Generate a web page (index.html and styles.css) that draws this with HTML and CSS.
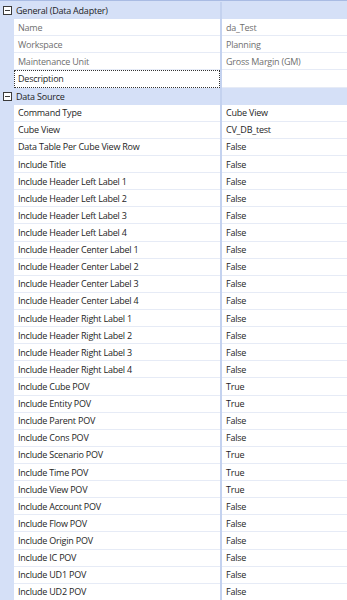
FILE: index.html
```html
<!DOCTYPE html>
<html>
<head>
<meta charset="utf-8">
<link rel="stylesheet" href="styles.css">
</head>
<body>
<div class="grid">
  <div class="cat">
    <div class="gutter"><svg class="tog" width="9" height="9" viewBox="0 0 9 9"><rect x="0.5" y="0.5" width="8" height="8" fill="#fff" stroke="#3b3b3b"/><rect x="2" y="4" width="5" height="1" fill="#3b3b3b"/></svg></div>
    <div class="cat-name">General (Data Adapter)</div>
    <div class="div"></div>
    <div class="cat-val"></div>
  </div>
  <div class="row ro"><div class="gutter"></div><div class="name">Name</div><div class="div"></div><div class="val">da_Test</div></div>
  <div class="row ro"><div class="gutter"></div><div class="name">Workspace</div><div class="div"></div><div class="val">Planning</div></div>
  <div class="row ro"><div class="gutter"></div><div class="name">Maintenance Unit</div><div class="div"></div><div class="val">Gross Margin (GM)</div></div>
  <div class="row"><div class="gutter"></div><div class="name focus">Description</div><div class="div"></div><div class="val"></div></div>
  <div class="cat">
    <div class="gutter"><svg class="tog" width="9" height="9" viewBox="0 0 9 9"><rect x="0.5" y="0.5" width="8" height="8" fill="#fff" stroke="#3b3b3b"/><rect x="2" y="4" width="5" height="1" fill="#3b3b3b"/></svg></div>
    <div class="cat-name">Data Source</div>
    <div class="div"></div>
    <div class="cat-val"></div>
  </div>
  <div class="row"><div class="gutter"></div><div class="name">Command Type</div><div class="div"></div><div class="val">Cube View</div></div>
  <div class="row"><div class="gutter"></div><div class="name">Cube View</div><div class="div"></div><div class="val">CV_DB_test</div></div>
  <div class="row"><div class="gutter"></div><div class="name">Data Table Per Cube View Row</div><div class="div"></div><div class="val">False</div></div>
  <div class="row"><div class="gutter"></div><div class="name">Include Title</div><div class="div"></div><div class="val">False</div></div>
  <div class="row"><div class="gutter"></div><div class="name">Include Header Left Label 1</div><div class="div"></div><div class="val">False</div></div>
  <div class="row"><div class="gutter"></div><div class="name">Include Header Left Label 2</div><div class="div"></div><div class="val">False</div></div>
  <div class="row"><div class="gutter"></div><div class="name">Include Header Left Label 3</div><div class="div"></div><div class="val">False</div></div>
  <div class="row"><div class="gutter"></div><div class="name">Include Header Left Label 4</div><div class="div"></div><div class="val">False</div></div>
  <div class="row"><div class="gutter"></div><div class="name">Include Header Center Label 1</div><div class="div"></div><div class="val">False</div></div>
  <div class="row"><div class="gutter"></div><div class="name">Include Header Center Label 2</div><div class="div"></div><div class="val">False</div></div>
  <div class="row"><div class="gutter"></div><div class="name">Include Header Center Label 3</div><div class="div"></div><div class="val">False</div></div>
  <div class="row"><div class="gutter"></div><div class="name">Include Header Center Label 4</div><div class="div"></div><div class="val">False</div></div>
  <div class="row"><div class="gutter"></div><div class="name">Include Header Right Label 1</div><div class="div"></div><div class="val">False</div></div>
  <div class="row"><div class="gutter"></div><div class="name">Include Header Right Label 2</div><div class="div"></div><div class="val">False</div></div>
  <div class="row"><div class="gutter"></div><div class="name">Include Header Right Label 3</div><div class="div"></div><div class="val">False</div></div>
  <div class="row"><div class="gutter"></div><div class="name">Include Header Right Label 4</div><div class="div"></div><div class="val">False</div></div>
  <div class="row"><div class="gutter"></div><div class="name">Include Cube POV</div><div class="div"></div><div class="val">True</div></div>
  <div class="row"><div class="gutter"></div><div class="name">Include Entity POV</div><div class="div"></div><div class="val">True</div></div>
  <div class="row"><div class="gutter"></div><div class="name">Include Parent POV</div><div class="div"></div><div class="val">False</div></div>
  <div class="row"><div class="gutter"></div><div class="name">Include Cons POV</div><div class="div"></div><div class="val">False</div></div>
  <div class="row"><div class="gutter"></div><div class="name">Include Scenario POV</div><div class="div"></div><div class="val">True</div></div>
  <div class="row"><div class="gutter"></div><div class="name">Include Time POV</div><div class="div"></div><div class="val">True</div></div>
  <div class="row"><div class="gutter"></div><div class="name">Include View POV</div><div class="div"></div><div class="val">True</div></div>
  <div class="row"><div class="gutter"></div><div class="name">Include Account POV</div><div class="div"></div><div class="val">False</div></div>
  <div class="row"><div class="gutter"></div><div class="name">Include Flow POV</div><div class="div"></div><div class="val">False</div></div>
  <div class="row"><div class="gutter"></div><div class="name">Include Origin POV</div><div class="div"></div><div class="val">False</div></div>
  <div class="row"><div class="gutter"></div><div class="name">Include IC POV</div><div class="div"></div><div class="val">False</div></div>
  <div class="row"><div class="gutter"></div><div class="name">Include UD1 POV</div><div class="div"></div><div class="val">False</div></div>
  <div class="row"><div class="gutter"></div><div class="name">Include UD2 POV</div><div class="div"></div><div class="val">False</div></div>
</div>
</body>
</html>
```
FILE: styles.css
```css
html, body {
  margin: 0;
  padding: 0;
  background: #ffffff;
}
body {
  font-family: "Open Sans", "Noto Sans", sans-serif;
  font-size: 9px;
  letter-spacing: -0.22px;
  color: #1e1e1e;
  overflow: hidden;
}
.grid {
  width: 347px;
  border-top: 1px solid #a9bbe3;
  padding-top: 1px;
  background: #d5e0f7;
  display: flex;
  flex-direction: column;
}
.cat, .row {
  display: flex;
  height: 17.12px;
  flex: none;
  align-items: stretch;
}
.cat {
  background: #d5e0f7;
}
.row {
  background: #ffffff;
}
.gutter {
  width: 14px;
  flex: none;
  background: #d5e0f7;
  display: flex;
  align-items: center;
  justify-content: center;
}
.cat-name {
  width: 206px;
  flex: none;
  display: flex;
  align-items: center;
  padding-left: 2px;
  box-sizing: border-box;
}
.cat-val { flex: 1; }
.div {
  width: 2px;
  flex: none;
  background: #c4d2ef;
}
.name {
  width: 206px;
  flex: none;
  box-sizing: border-box;
  padding-left: 4px;
  display: flex;
  align-items: center;
  border-bottom: 1px solid #e6ebf6;
  white-space: nowrap;
}
.val {
  flex: 1;
  box-sizing: border-box;
  padding-left: 4px;
  display: flex;
  align-items: center;
  border-bottom: 1px solid #e6ebf6;
  white-space: nowrap;
}
.ro .name, .ro .val {
  color: #6f6f6f;
}
.focus {
  border: 1px dotted #333;
  padding-left: 3px;
}
.tog { display: block; }
```
